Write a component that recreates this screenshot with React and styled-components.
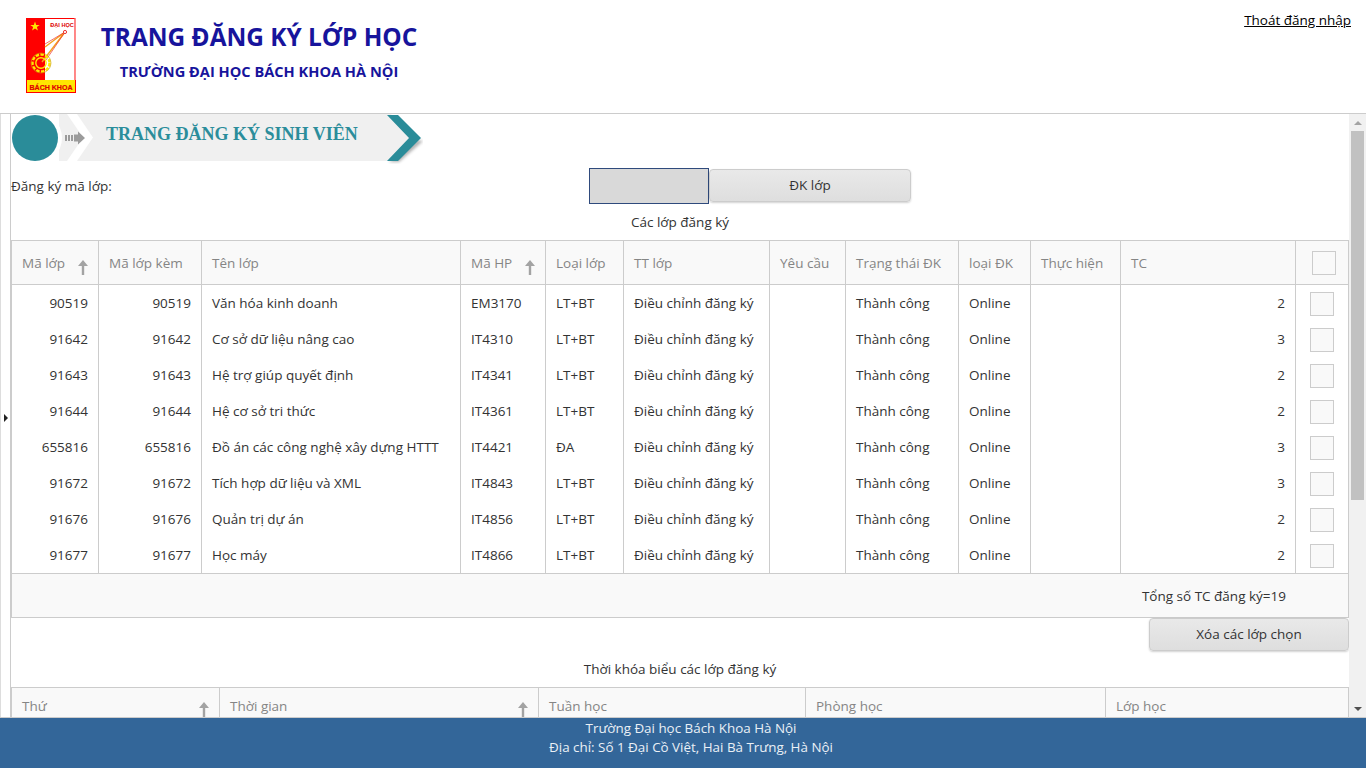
import React from "react";
import styled, { createGlobalStyle } from "styled-components";

const Global = createGlobalStyle`
  html, body { margin: 0; padding: 0; height: 100%; overflow: hidden; background: #fff; }
  body { font-family: "Open Sans", "Noto Sans", "Liberation Sans", sans-serif; font-size: 13.5px; color: #333; }
  * { box-sizing: border-box; }
`;

const Page = styled.div`
  height: 768px;
  display: flex;
  flex-direction: column;
`;

const Header = styled.header`
  height: 114px;
  flex: none;
  border-bottom: 1px solid #ccc;
  display: flex;
  align-items: flex-start;
  padding: 18px 15px 0 26px;
`;

const LogoBox = styled.svg`
  width: 50px;
  height: 75px;
  flex: none;
`;

const TitleBlock = styled.div`
  width: 320px;
  margin-left: 23px;
  display: flex;
  flex-direction: column;
  align-items: center;
  color: #17149c;
  font-weight: 700;
`;

const Title = styled.div`
  font-size: 24.4px;
  line-height: 38px;
`;

const SubTitle = styled.div`
  font-size: 14.6px;
  line-height: 20px;
  margin-top: 5px;
`;

const Logout = styled.a`
  margin-left: auto;
  margin-top: -8px;
  line-height: 20px;
  font-size: 13.5px;
  color: #000;
  text-decoration: underline;
`;

const Main = styled.div`
  flex: 1;
  min-height: 0;
  display: flex;
`;

const WestStrip = styled.div`
  width: 11px;
  flex: none;
  border-left: 1px solid #ddd;
  border-right: 1px solid #ccc;
  display: flex;
  align-items: center;
  justify-content: center;
`;

const Toggler = styled.span`
  width: 0;
  height: 0;
  margin-top: 5px;
  border-left: 4px solid #222;
  border-top: 4px solid transparent;
  border-bottom: 4px solid transparent;
`;

const Center = styled.main`
  flex: 1;
  min-width: 0;
  overflow: hidden;
`;

const ScrollRail = styled.div`
  width: 17px;
  flex: none;
  background: #f1f1f1;
  display: flex;
  flex-direction: column;
  justify-content: space-between;
`;

const RailTop = styled.div`
  display: flex;
  flex-direction: column;
`;

const RailButton = styled.div`
  height: 17px;
  display: flex;
  align-items: center;
  justify-content: center;
  &::before {
    content: "";
    width: 0;
    height: 0;
    border-left: 4px solid transparent;
    border-right: 4px solid transparent;
    ${(p) => (p.$down ? "border-top: 4px solid #505050;" : "border-bottom: 4px solid #a3a3a3;")}
  }
`;

const RailThumb = styled.div`
  height: 369px;
  margin: 0 2px;
  background: #c1c1c1;
`;

const Banner = styled.div`
  position: relative;
  width: 412px;
  height: 47px;
`;

const BannerArt = styled.svg`
  position: absolute;
  inset: 0;
`;

const BannerTitle = styled.h1`
  position: relative;
  margin: 0;
  padding-left: 95px;
  font-family: "Liberation Serif", serif;
  font-size: 18px;
  font-weight: 700;
  line-height: 40px;
  color: #2b8d9b;
`;

const RegisterRow = styled.div`
  display: flex;
  align-items: flex-start;
  margin-top: 7px;
  height: 36px;
  line-height: 36px;
`;

const RegisterLabel = styled.label`
  width: 578px;
`;

const CodeInput = styled.input`
  width: 120px;
  height: 36px;
  background: #d9d9d9;
  border: 1px solid #2f4a7c;
  padding: 0;
`;

const GrayButton = styled.button`
  width: ${(p) => p.$width}px;
  height: 33px;
  margin-top: ${(p) => p.$top || 0}px;
  border: 1px solid #ccc;
  border-radius: 4px;
  background: linear-gradient(#e9e9e9, #dedede);
  box-shadow: 0 1px 2px rgba(0, 0, 0, 0.18);
  font: inherit;
  line-height: 1;
  color: #333;
  padding: 0;
`;

const Caption = styled.div`
  text-align: center;
  line-height: 20px;
  margin-top: ${(p) => p.$top}px;
  margin-bottom: ${(p) => p.$bottom}px;
`;

const TableBox = styled.div`
  border: 1px solid #ccc;
`;

const Table = styled.table`
  width: 100%;
  table-layout: fixed;
  border-collapse: separate;
  border-spacing: 0;
`;

const HeadCell = styled.th`
  height: ${(p) => p.$h}px;
  padding: 0 10px;
  background: #f9f9f9;
  border-right: 1px solid #ccc;
  border-bottom: 1px solid #ccc;
  font-weight: 400;
  font-size: 13.5px;
  color: #858585;
  text-align: left;
  position: relative;
  &:last-child { border-right: none; }
`;

const SortArrow = styled.svg`
  position: absolute;
  right: 9px;
  bottom: ${(p) => p.$bottom}px;
`;

const Cell = styled.td`
  height: 36px;
  padding: 0 10px;
  border-right: 1px solid #ccc;
  text-align: ${(p) => (p.$right ? "right" : "left")};
  white-space: nowrap;
  &:last-child { border-right: none; }
`;

const CheckCell = styled.td`
  height: 36px;
  padding: 1px 0 0 14px;
`;

const Check = styled.span`
  display: block;
  width: 24px;
  height: 24px;
  margin-left: ${(p) => p.$left || 0}px;
  background: #f9f9f9;
  border: 1px solid #ccc;
`;

const TotalBar = styled.div`
  height: 44px;
  background: #f9f9f9;
  border-top: 1px solid #ccc;
  display: flex;
  align-items: center;
  justify-content: flex-end;
  padding-right: 62px;
`;

const ActionRow = styled.div`
  display: flex;
  justify-content: flex-end;
`;

const Footer = styled.footer`
  height: 51px;
  flex: none;
  border-top: 1px solid #ccc;
  background: #336699;
  color: #eaf0f6;
  text-align: center;
  font-size: 13.4px;
  line-height: 19px;
  padding: 1px 0 0 16px;
`;

const classCols = [87, 103, 259, 85, 78, 146, 76, 113, 72, 90, 175, 52];
const classHeads = ["Mã lớp", "Mã lớp kèm", "Tên lớp", "Mã HP", "Loại lớp", "TT lớp", "Yêu cầu", "Trạng thái ĐK", "loại ĐK", "Thực hiện", "TC"];
const rows = [
  ["90519", "Văn hóa kinh doanh", "EM3170", "LT+BT", 2],
  ["91642", "Cơ sở dữ liệu nâng cao", "IT4310", "LT+BT", 3],
  ["91643", "Hệ trợ giúp quyết định", "IT4341", "LT+BT", 2],
  ["91644", "Hệ cơ sở tri thức", "IT4361", "LT+BT", 2],
  ["655816", "Đồ án các công nghệ xây dựng HTTT", "IT4421", "ĐA", 3],
  ["91672", "Tích hợp dữ liệu và XML", "IT4843", "LT+BT", 3],
  ["91676", "Quản trị dự án", "IT4856", "LT+BT", 2],
  ["91677", "Học máy", "IT4866", "LT+BT", 2],
];
const scheduleCols = [208, 319, 267, 300, 242];
const scheduleHeads = ["Thứ", "Thời gian", "Tuần học", "Phòng học", "Lớp học"];

const Arrow = ({ bottom }) => (
  <SortArrow $bottom={bottom} width="12" height="16" viewBox="0 0 12 16">
    <path d="M6 1 L11 7 H7.2 V16 H4.8 V7 H1 Z" fill="#a3a3a3" />
  </SortArrow>
);

const Logo = () => (
  <LogoBox viewBox="0 0 50 75">
    <rect width="50" height="75" fill="#f00" />
    <rect x="19" y="1" width="29.5" height="61" fill="#fff" />
    <rect x="48.5" y="0" width="1.5" height="62" fill="#ff8a8a" />
    <rect x="1" y="62" width="48" height="12" fill="#ffe600" />
    <path d="M9 3.5l1.2 3.4h3.5l-2.8 2.1 1 3.4-2.9-2-2.9 2 1-3.4-2.8-2.1h3.5z" fill="#ffe600" />
    <text x="36" y="9" fontFamily="Liberation Sans" fontSize="5.6" fontWeight="700" fill="#d00" textAnchor="middle">ĐẠI HỌC</text>
    <path d="M39 14 L19 29 M39 14 L16 44" stroke="#f4a020" strokeWidth="1.4" fill="none" />
    <path d="M39 14 L19 26 M39 14 L20 42" stroke="#e33" strokeWidth="0.7" fill="none" />
    <circle cx="39" cy="14" r="1.6" fill="#fff" stroke="#e33" strokeWidth="1" />
    <circle cx="15" cy="45" r="8.5" fill="none" stroke="#ffe600" strokeWidth="2.4" strokeDasharray="3.5 1.4" />
    <circle cx="15" cy="45" r="10" fill="none" stroke="#c9a000" strokeWidth="0.6" />
    <circle cx="15" cy="45" r="5.2" fill="none" stroke="#ffe600" strokeWidth="1.4" />
    <text x="3.500" y="71.500" fontFamily="Liberation Sans" fontSize="7.4" fontWeight="700" fill="#e00000" stroke="#e00000" strokeWidth="0.2" textLength="43" lengthAdjust="spacingAndGlyphs">BÁCH KHOA</text>
  </LogoBox>
);

const BannerGraphic = () => (
  <BannerArt width="412" height="50" viewBox="0 0 412 50">
    <defs>
      <filter id="bannerShadow" x="-20%" y="-20%" width="150%" height="150%">
        <feGaussianBlur stdDeviation="1.4" />
      </filter>
    </defs>
    <path d="M48 0 H380 L398 24 L380 47 H48 Z" fill="#f0f0f0" />
    <path d="M56 0 H66 L82 23.500 L66 47 H56 L72 23.500 Z" fill="#fff" />
    <circle cx="24" cy="24" r="27" fill="#fff" />
    <circle cx="24" cy="24" r="23" fill="#2a8c99" />
    <path d="M54 21h2v6h-2zM57 21h2v6h-2zM60 21h2v6h-2zM63 20.500h4v-3l7 6.500-7 6.500v-3h-4z" fill="#9b9b9b" />
    <path d="M378 48 H388 L412 27 L406 26 Z" fill="#555" opacity="0.45" filter="url(#bannerShadow)" />
    <path d="M376 1 H387 L410 24 L387 47 H376 L398 24 Z" fill="#2a8c99" />
  </BannerArt>
);

export default function App() {
  return (
    <Page>
      <Global />
      <Header>
        <Logo />
        <TitleBlock>
          <Title>TRANG ĐĂNG KÝ LỚP HỌC</Title>
          <SubTitle>TRƯỜNG ĐẠI HỌC BÁCH KHOA HÀ NỘI</SubTitle>
        </TitleBlock>
        <Logout>Thoát đăng nhập</Logout>
      </Header>
      <Main>
        <WestStrip><Toggler /></WestStrip>
        <Center>
          <Banner>
            <BannerGraphic />
            <BannerTitle>TRANG ĐĂNG KÝ SINH VIÊN</BannerTitle>
          </Banner>
          <RegisterRow>
            <RegisterLabel>Đăng ký mã lớp:</RegisterLabel>
            <CodeInput />
            <GrayButton $width={202} $top={1}>ĐK lớp</GrayButton>
          </RegisterRow>
          <Caption $top={8} $bottom={8}>Các lớp đăng ký</Caption>
          <TableBox>
            <Table>
              <colgroup>{classCols.map((w, i) => <col key={i} width={w} />)}</colgroup>
              <thead>
                <tr>
                  {classHeads.map((h, i) => (
                    <HeadCell key={h} $h={44}>
                      {h}
                      {(i === 0 || i === 3) && <Arrow bottom={9} />}
                    </HeadCell>
                  ))}
                  <HeadCell $h={44}><Check $left={6} /></HeadCell>
                </tr>
              </thead>
              <tbody>
                {rows.map((r) => (
                  <tr key={r[0]}>
                    <Cell $right>{r[0]}</Cell>
                    <Cell $right>{r[0]}</Cell>
                    <Cell>{r[1]}</Cell>
                    <Cell>{r[2]}</Cell>
                    <Cell>{r[3]}</Cell>
                    <Cell>Điều chỉnh đăng ký</Cell>
                    <Cell />
                    <Cell>Thành công</Cell>
                    <Cell>Online</Cell>
                    <Cell />
                    <Cell $right>{r[4]}</Cell>
                    <CheckCell><Check /></CheckCell>
                  </tr>
                ))}
              </tbody>
            </Table>
            <TotalBar>Tổng số TC đăng ký=19</TotalBar>
          </TableBox>
          <ActionRow><GrayButton $width={200}>Xóa các lớp chọn</GrayButton></ActionRow>
          <Caption $top={8} $bottom={8}>Thời khóa biểu các lớp đăng ký</Caption>
          <TableBox>
            <Table>
              <colgroup>{scheduleCols.map((w, i) => <col key={i} width={w} />)}</colgroup>
              <thead>
                <tr>
                  {scheduleHeads.map((h, i) => (
                    <HeadCell key={h} $h={36}>
                      {h}
                      {i < 2 && <Arrow bottom={6} />}
                    </HeadCell>
                  ))}
                </tr>
              </thead>
            </Table>
          </TableBox>
        </Center>
        <ScrollRail>
          <RailTop>
            <RailButton />
            <RailThumb />
          </RailTop>
          <RailButton $down />
        </ScrollRail>
      </Main>
      <Footer>
        <div>Trường Đại học Bách Khoa Hà Nội</div>
        <div>Địa chỉ: Số 1 Đại Cồ Việt, Hai Bà Trưng, Hà Nội</div>
      </Footer>
    </Page>
  );
}
